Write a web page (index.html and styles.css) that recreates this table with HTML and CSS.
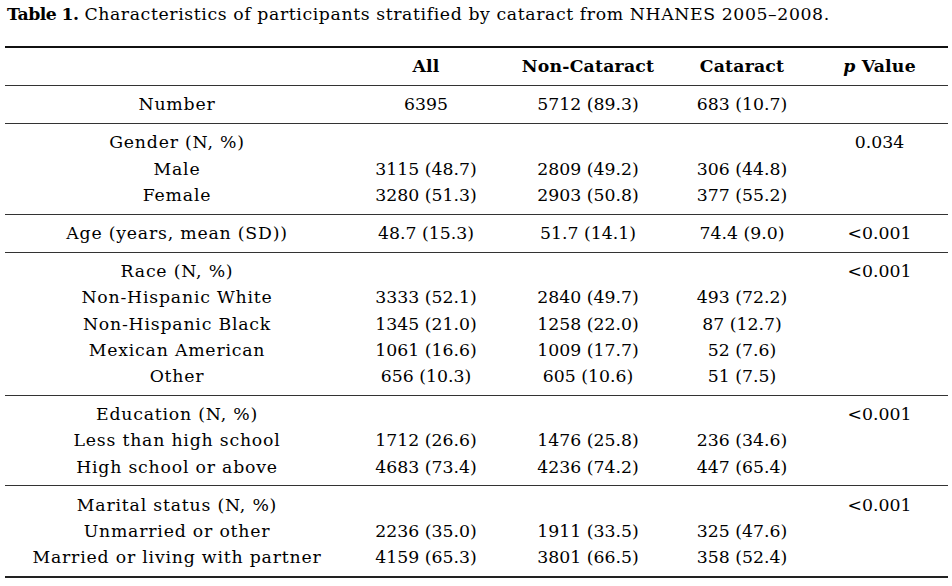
FILE: index.html
```html
<!DOCTYPE html>
<html lang="en">
<head>
<meta charset="utf-8">
<title>Table 1</title>
<link rel="stylesheet" href="styles.css">
</head>
<body>
<div class="page">
  <p class="caption"><b>Table 1.</b> Characteristics of participants stratified by cataract from NHANES 2005–2008.</p>
  <div class="table">
    <div class="group head">
      <div class="row">
        <span class="label"></span>
        <span class="cell">All</span>
        <span class="cell">Non-Cataract</span>
        <span class="cell">Cataract</span>
        <span class="cell"><i>p</i> Value</span>
      </div>
    </div>
    <div class="group">
      <div class="row">
        <span class="label">Number</span>
        <span class="cell">6395</span>
        <span class="cell">5712 (89.3)</span>
        <span class="cell">683 (10.7)</span>
        <span class="cell"></span>
      </div>
    </div>
    <div class="group">
      <div class="row">
        <span class="label">Gender (N, %)</span>
        <span class="cell"></span>
        <span class="cell"></span>
        <span class="cell"></span>
        <span class="cell">0.034</span>
      </div>
      <div class="row">
        <span class="label">Male</span>
        <span class="cell">3115 (48.7)</span>
        <span class="cell">2809 (49.2)</span>
        <span class="cell">306 (44.8)</span>
        <span class="cell"></span>
      </div>
      <div class="row">
        <span class="label">Female</span>
        <span class="cell">3280 (51.3)</span>
        <span class="cell">2903 (50.8)</span>
        <span class="cell">377 (55.2)</span>
        <span class="cell"></span>
      </div>
    </div>
    <div class="group">
      <div class="row">
        <span class="label">Age (years, mean (SD))</span>
        <span class="cell">48.7 (15.3)</span>
        <span class="cell">51.7 (14.1)</span>
        <span class="cell">74.4 (9.0)</span>
        <span class="cell">&lt;0.001</span>
      </div>
    </div>
    <div class="group">
      <div class="row">
        <span class="label">Race (N, %)</span>
        <span class="cell"></span>
        <span class="cell"></span>
        <span class="cell"></span>
        <span class="cell">&lt;0.001</span>
      </div>
      <div class="row">
        <span class="label">Non-Hispanic White</span>
        <span class="cell">3333 (52.1)</span>
        <span class="cell">2840 (49.7)</span>
        <span class="cell">493 (72.2)</span>
        <span class="cell"></span>
      </div>
      <div class="row">
        <span class="label">Non-Hispanic Black</span>
        <span class="cell">1345 (21.0)</span>
        <span class="cell">1258 (22.0)</span>
        <span class="cell">87 (12.7)</span>
        <span class="cell"></span>
      </div>
      <div class="row">
        <span class="label">Mexican American</span>
        <span class="cell">1061 (16.6)</span>
        <span class="cell">1009 (17.7)</span>
        <span class="cell">52 (7.6)</span>
        <span class="cell"></span>
      </div>
      <div class="row">
        <span class="label">Other</span>
        <span class="cell">656 (10.3)</span>
        <span class="cell">605 (10.6)</span>
        <span class="cell">51 (7.5)</span>
        <span class="cell"></span>
      </div>
    </div>
    <div class="group">
      <div class="row">
        <span class="label">Education (N, %)</span>
        <span class="cell"></span>
        <span class="cell"></span>
        <span class="cell"></span>
        <span class="cell">&lt;0.001</span>
      </div>
      <div class="row">
        <span class="label">Less than high school</span>
        <span class="cell">1712 (26.6)</span>
        <span class="cell">1476 (25.8)</span>
        <span class="cell">236 (34.6)</span>
        <span class="cell"></span>
      </div>
      <div class="row">
        <span class="label">High school or above</span>
        <span class="cell">4683 (73.4)</span>
        <span class="cell">4236 (74.2)</span>
        <span class="cell">447 (65.4)</span>
        <span class="cell"></span>
      </div>
    </div>
    <div class="group last">
      <div class="row">
        <span class="label">Marital status (N, %)</span>
        <span class="cell"></span>
        <span class="cell"></span>
        <span class="cell"></span>
        <span class="cell">&lt;0.001</span>
      </div>
      <div class="row">
        <span class="label">Unmarried or other</span>
        <span class="cell">2236 (35.0)</span>
        <span class="cell">1911 (33.5)</span>
        <span class="cell">325 (47.6)</span>
        <span class="cell"></span>
      </div>
      <div class="row">
        <span class="label">Married or living with partner</span>
        <span class="cell">4159 (65.3)</span>
        <span class="cell">3801 (66.5)</span>
        <span class="cell">358 (52.4)</span>
        <span class="cell"></span>
      </div>
    </div>
  </div>
</div>
</body>
</html>
```

FILE: styles.css
```css
html, body {
  margin: 0;
  padding: 0;
  background: #ffffff;
}

body {
  font-family: "DejaVu Serif", "Liberation Serif", serif;
  font-size: 17.3px;
  color: #000000;
}

.page {
  padding: 0 4px 0 5px;
}

.caption {
  margin: 0;
  padding-left: 2px;
  line-height: 28px;
  letter-spacing: 0.6px;
}

.caption b {
  font-weight: 700;
  letter-spacing: -0.6px;
}

.table {
  margin-top: 18px;
  width: 943px;
  border-top: 2px solid #111111;
  border-bottom: 2px solid #222222;
}

.group {
  padding: 5.4px 0;
  border-top: 1px solid #333333;
}

.group.head {
  border-top: none;
  font-weight: 700;
}

.row {
  display: grid;
  grid-template-columns: 344px 154px 170px 138px 137px;
  line-height: 26.25px;
  height: 26.25px;
}

.label,
.cell {
  text-align: center;
  white-space: nowrap;
}

.label {
  letter-spacing: 0.8px;
}

.head .cell {
  letter-spacing: 0.2px;
}
```
